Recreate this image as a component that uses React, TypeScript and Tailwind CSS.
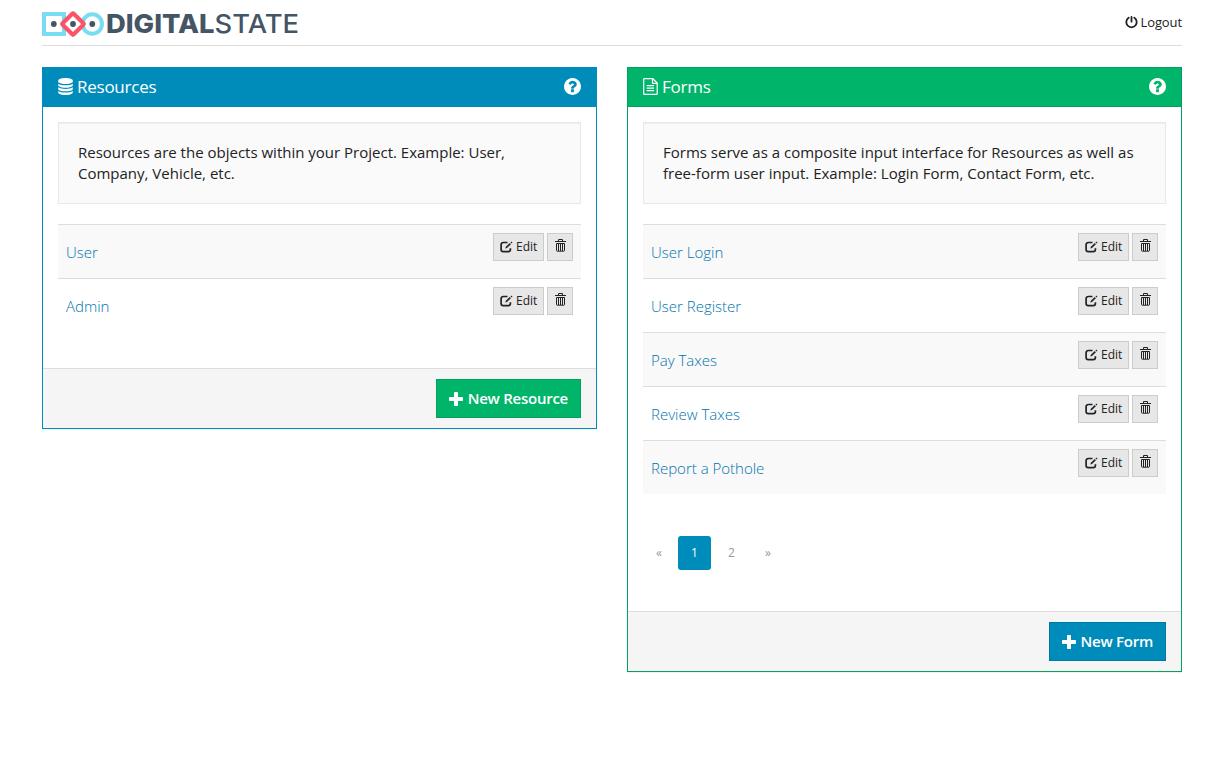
import React from 'react';

type Tone = 'blue' | 'green';

function Logo() {
  return (
    <svg width="260" height="32" viewBox="0 0 260 32" className="overflow-visible" role="img" aria-label="DigitalState">
      <rect x="2" y="3" width="20" height="20" fill="#fff" stroke="#7adcf3" strokeWidth="4" />
      <circle cx="50.3" cy="13" r="9.7" fill="#fff" stroke="#7adcf3" strokeWidth="4" />
      <rect x="23.200" y="5.200" width="15.600" height="15.600" rx="1" transform="rotate(45 31 13)" fill="#fff" stroke="#f95468" strokeWidth="4.200" />
      <circle cx="11.8" cy="13" r="2.9" fill="#445566" />
      <circle cx="31" cy="13" r="2.9" fill="#445566" />
      <circle cx="50.3" cy="13" r="2.9" fill="#445566" />
      <text x="64" y="22.3" textLength="108.500" lengthAdjust="spacingAndGlyphs" fill="#445566" className="font-['Inter',sans-serif] text-[26px] leading-none font-extrabold">DIGITAL</text>
      <text x="172.500" y="22.3" textLength="84.500" lengthAdjust="spacingAndGlyphs" fill="#445566" className="font-['Inter',sans-serif] text-[26px] leading-none font-medium">STATE</text>
    </svg>
  );
}

function PowerIcon() {
  return (
    <svg width="13" height="13" viewBox="0 0 13 13" fill="none" stroke="#222" strokeLinecap="round">
      <path d="M3.7 1.7a5.2 5.2 0 1 0 5.6 0" strokeWidth="1.8" />
      <path d="M6.5 .9v4.800" strokeWidth="1.8" />
    </svg>
  );
}

function DatabaseIcon() {
  return (
    <svg width="15" height="17" viewBox="0 0 1536 1792" fill="#fff">
      <path d="M768 768q237 0 443-43t325-127v170q0 69-103 128t-280 93.500-385 34.500-385-34.500-280-93.500-103-128v-170q119 84 325 127t443 43zM768 1536q237 0 443-43t325-127v170q0 69-103 128t-280 93.500-385 34.500-385-34.500-280-93.500-103-128v-170q119 84 325 127t443 43zM768 1152q237 0 443-43t325-127v170q0 69-103 128t-280 93.500-385 34.500-385-34.500-280-93.500-103-128v-170q119 84 325 127t443 43zM768 0q208 0 385 34.500t280 93.500 103 128v128q0 69-103 128t-280 93.500-385 34.500-385-34.500-280-93.500-103-128v-128q0-69 103-128t280-93.500 385-34.500z" />
    </svg>
  );
}

function FileIcon() {
  return (
    <svg width="15" height="17" viewBox="0 0 15 17" fill="none" stroke="#fff" strokeWidth="1.2">
      <path d="M1.200.7h8.600l4.400 4.300v10.700a.6.6 0 0 1-.6.6H1.300a.6.6 0 0 1-.6-.6V1.200a.5.5 0 0 1 .5-.5z" />
      <path d="M9.500.8v4.500h4.600M3.700 7.600h7.400M3.700 10.100h7.400M3.700 12.600h7.400" />
    </svg>
  );
}

function HelpIcon() {
  return (
    <svg width="17" height="17" viewBox="0 0 1536 1536" fill="#fff">
      <path d="M896 1248v-192q0-14-9-23t-23-9h-192q-14 0-23 9t-9 23v192q0 14 9 23t23 9h192q14 0 23-9t9-23zM1152 576q0-88-55.500-163t-138.500-116-170-41q-243 0-371 213-15 24 8 42l132 100q7 6 19 6 16 0 25-12 53-68 86-92 34-24 86-24 48 0 85.500 26t37.500 59q0 38-20 61t-68 45q-63 28-115.500 86.500t-52.500 125.500v36q0 14 9 23t23 9h192q14 0 23-9t9-23q0-19 21.500-49.500t54.500-49.500q32-18 49-28.500t46-35 44.500-48 28-60.500 12.500-81zM1536 768q0 209-103 385.500t-279.500 279.500-385.500 103-385.500-103-279.500-279.500-103-385.500 103-385.500 279.500-279.500 385.500-103 385.500 103 279.500 279.500 103 385.500z" />
    </svg>
  );
}

function EditIcon() {
  return (
    <svg width="13" height="12" viewBox="0 0 13 12" fill="none" stroke="#222">
      <path d="M7.500 1.500H3.300A2.200 2.200 0 0 0 1.100 3.700v4.800a2.200 2.200 0 0 0 2.200 2.200h4.900a2.200 2.200 0 0 0 2.200-2.200V7.300" strokeWidth="1.700" />
      <path d="M5.300 7.500l.6-1.700L9.700 2l1.200 1.200-3.900 3.800z" fill="#222" stroke="none" />
      <path d="M10.400 1.300l.8-.8 1.300 1.300-.8.800z" fill="#222" stroke="none" />
    </svg>
  );
}

function TrashIcon() {
  return (
    <svg width="11" height="14" viewBox="0 0 11 14" fill="none" stroke="#222">
      <path d="M0 3.500h11M3.500 3.200V1.500h4v1.700" />
      <path d="M1.500 5.500h8v7a.7.7 0 0 1-.7.700H2.200a.7.700 0 0 1-.7-.7zM3.500 5.500v7.500M5.500 5.500v7.500M7.500 5.500v7.500" />
    </svg>
  );
}

function PlusIcon() {
  return (
    <svg width="14" height="14" viewBox="0 0 14 14" fill="#fff">
      <path d="M5 .8q0-.8.8-.8h2.400q.8 0 .8.8V5h4.200q.8 0 .8.800v2.400q0 .8-.8.800H9v4.200q0 .8-.8.800H5.800q-.8 0-.8-.8V9H.8Q0 9 0 8.200V5.800Q0 5 .8 5H5z" />
    </svg>
  );
}

function Row({ name }: { name: string }) {
  return (
    <li className="flex h-[54px] items-start justify-between border-t border-[#ddd] px-2 pt-2 odd:bg-[#f9f9f9]">
      <a href="#" className="mt-[9px] text-[15px] leading-[21px] font-light text-[#0073ae]">{name}</a>
      <div className="flex gap-[3px]">
        <button className="flex h-7 w-[51px] items-center gap-[3px] border border-[#ccc] bg-[#e7e7e7] pl-[6px] text-[12px] leading-[18px] text-[#222]">
          <EditIcon />
          <span>Edit</span>
        </button>
        <button aria-label="Delete" className="flex h-7 w-[26px] justify-center border border-[#ccc] bg-[#e7e7e7] pt-[4px]">
          <TrashIcon />
        </button>
      </div>
    </li>
  );
}

const tones = {
  blue: {
    panel: 'border-[#008cba]',
    head: 'border-[#008cba] bg-[#008cba]',
    button: 'border-[#0079a1] bg-[#008cba]',
  },
  green: {
    panel: 'border-[#089e60]',
    head: 'border-[#089e60] bg-[#00b56a]',
    button: 'border-[#089e60] bg-[#00b56a]',
  },
};

interface PanelProps {
  tone: Tone;
  actionTone: Tone;
  icon: React.ReactNode;
  title: string;
  description: string;
  items: string[];
  action: string;
  children?: React.ReactNode;
}

function Panel({ tone, actionTone, icon, title, description, items, action, children }: PanelProps) {
  return (
    <section className={`w-[555px] border bg-white shadow-[0_1px_1px_rgba(0,0,0,0.05)] ${tones[tone].panel}`}>
      <header className={`flex h-[39px] items-center justify-between border-b px-[15px] pb-[2px] text-white ${tones[tone].head}`}>
        <h2 className="flex items-center gap-1 text-[17px] leading-[19px] tracking-[-0.25px]">
          {icon}
          <span>{title}</span>
        </h2>
        <HelpIcon />
      </header>
      <div className="p-[15px]">
        <p className="mb-5 h-[82px] border border-[#e8e8e8] bg-[#fafafa] px-[19px] py-[19px] text-[15px] leading-[21px] text-[#222] shadow-[inset_0_1px_1px_rgba(0,0,0,0.05)]">
          {description}
        </p>
        <ul className="mb-[21px]">
          {items.map((item) => <Row key={item} name={item} />)}
        </ul>
        {children}
      </div>
      <footer className="flex justify-end border-t border-[#ddd] bg-[#f5f5f5] px-[15px] py-[10px]">
        <button className={`flex h-[39px] items-center gap-[5px] border px-3 text-[15px] leading-[21px] font-semibold tracking-[-0.25px] text-white ${tones[actionTone].button}`}>
          <PlusIcon />
          <span>{action}</span>
        </button>
      </footer>
    </section>
  );
}

function Pagination() {
  return (
    <nav className="mt-[42px] mb-[26px] flex gap-[3px] text-[12px] leading-[34px] text-[#999]">
      <a href="#" className="h-[34px] w-8 text-center">«</a>
      <a href="#" className="h-[34px] w-[33px] rounded-[3px] bg-[#008cba] text-center text-white">1</a>
      <a href="#" className="h-[34px] w-[35px] text-center">2</a>
      <a href="#" className="h-[34px] w-8 text-center">»</a>
    </nav>
  );
}

export default function App() {
  return (
    <div className="min-h-[759px] bg-white px-[42px] font-['Open_Sans',sans-serif] text-[#222]">
      <header className="flex h-[46px] items-start justify-between border-b border-[#ddd] pt-[11px]">
        <Logo />
        <a href="#" className="mt-px flex items-center gap-[3px] text-[13px] leading-[20px] tracking-[-0.1px]">
          <PowerIcon />
          <span>Logout</span>
        </a>
      </header>
      <main className="mt-[21px] flex items-start justify-between">
        <Panel
          tone="blue"
          actionTone="green"
          icon={<DatabaseIcon />}
          title="Resources"
          description="Resources are the objects within your Project. Example: User, Company, Vehicle, etc."
          items={['User', 'Admin']}
          action="New Resource"
        />
        <Panel
          tone="green"
          actionTone="blue"
          icon={<FileIcon />}
          title="Forms"
          description="Forms serve as a composite input interface for Resources as well as free-form user input. Example: Login Form, Contact Form, etc."
          items={['User Login', 'User Register', 'Pay Taxes', 'Review Taxes', 'Report a Pothole']}
          action="New Form"
        >
          <Pagination />
        </Panel>
      </main>
    </div>
  );
}
